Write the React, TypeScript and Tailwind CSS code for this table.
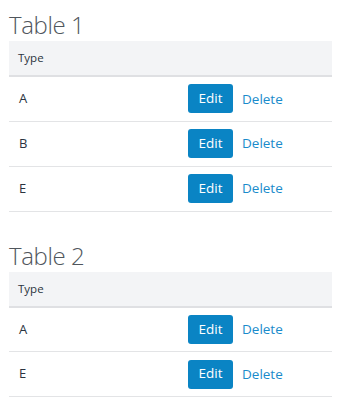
const tables = [
  { title: 'Table 1', rows: ['A', 'B', 'E'] },
  { title: 'Table 2', rows: ['A', 'E'] },
];

export default function App() {
  return (
    <div className="w-[341px] min-h-[413px] bg-white px-[9px] pt-[9px] font-['Open_Sans',sans-serif]">
      <div className="flex flex-col gap-[28px]">
        {tables.map((t) => (
          <DataTable key={t.title} title={t.title} rows={t.rows} />
        ))}
      </div>
    </div>
  );
}

function DataTable({ title, rows }: { title: string; rows: string[] }) {
  return (
    <section>
      <h2 className="text-[24px] leading-[32px] font-light text-[#50565c] tracking-[-0.4px]">{title}</h2>
      <table className="w-full border-collapse">
        <thead>
          <tr className="bg-[#f3f4f6] border-b-2 border-[#dfe0e3]">
            <th className="h-[35px] pl-[9px] text-left text-[11.5px] font-normal text-[#2b3440]">Type</th>
            <th className="w-[152px]" />
          </tr>
        </thead>
        <tbody>
          {rows.map((r) => (
            <tr key={r} className="border-b border-[#e3e4e6]">
              <td className="h-[45px] pl-[10px] align-top pt-[12px] text-[13px] text-[#2b3440]">{r}</td>
              <td className="pl-[8px]">
                <div className="flex items-center gap-[9px]">
                  <button className="w-[45px] h-[29px] rounded-[3px] bg-[#0a84c4] text-white text-[13.5px] leading-none">
                    Edit
                  </button>
                  <button className="text-[13.5px] text-[#1a8bcb]">Delete</button>
                </div>
              </td>
            </tr>
          ))}
        </tbody>
      </table>
    </section>
  );
}
